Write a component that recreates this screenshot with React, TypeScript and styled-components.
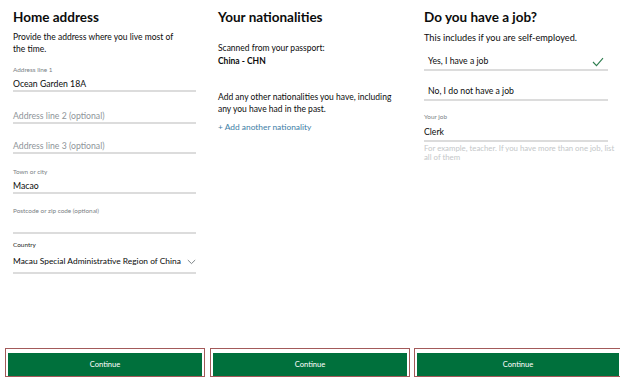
import React from "react";
import styled, { createGlobalStyle } from "styled-components";

const Global = createGlobalStyle`
  * { box-sizing: border-box; }
  html, body { margin: 0; padding: 0; background: #ffffff; }
  body { font-family: Lato, "Liberation Sans", sans-serif; color: #0b0c0c; }
`;

const Screen = styled.div`
  width: 620px;
  height: 390px;
  display: grid;
  grid-template-columns: 206px 206px 208px;
  overflow: hidden;
`;

const Panel = styled.section<{ $pad: number; $btnLeft: number; $btnRight: number }>`
  display: flex;
  flex-direction: column;
  height: 390px;
  padding: 6px 0 13px 0;
  --pad: ${(p) => p.$pad}px;
  --btn-left: ${(p) => p.$btnLeft}px;
  --btn-right: ${(p) => p.$btnRight}px;
`;

const Content = styled.div`
  flex: 1;
  padding: 0 6px 0 var(--pad);
  display: flex;
  flex-direction: column;
`;

const Heading = styled.h1`
  margin: 0;
  font-size: 13.5px;
  line-height: 22px;
  font-weight: 700;
`;

const Para = styled.p<{ $mt: number; $lh?: number; $w?: number; $size?: number }>`
  margin: ${(p) => p.$mt}px 0 0 0;
  font-size: ${(p) => p.$size ?? 8.5}px;
  line-height: ${(p) => p.$lh ?? 12}px;
  max-width: ${(p) => p.$w ?? 170}px;
`;

const Strong = styled.span`
  font-weight: 700;
`;

const Field = styled.div<{ $mt: number; $w?: number }>`
  margin-top: ${(p) => p.$mt}px;
  width: ${(p) => p.$w ?? 183}px;
  display: flex;
  flex-direction: column;
`;

const Label = styled.div<{ $dark?: boolean }>`
  font-size: 6.4px;
  line-height: 10px;
  color: ${(p) => (p.$dark ? "#1d1f20" : "#7a8185")};
`;

const Input = styled.div<{ $mt?: number; $h?: number; $placeholder?: boolean; $indent?: number; $size?: number }>`
  margin-top: ${(p) => p.$mt ?? 3}px;
  height: ${(p) => (p.$h ?? 12) + 2}px;
  line-height: 12px;
  padding-left: ${(p) => p.$indent ?? 0}px;
  font-size: ${(p) => p.$size ?? 8.7}px;
  color: ${(p) => (p.$placeholder ? "#8e9599" : "#0b0c0c")};
  border-bottom: 2px solid #dcdcdc;
  display: flex;
  align-items: flex-start;
  justify-content: space-between;
  white-space: nowrap;
`;

const Hint = styled.div`
  margin-top: 1.5px;
  font-size: 7.8px;
  line-height: 9px;
  color: #c4c7c9;
  width: 192px;
`;

const Link = styled.a`
  margin-top: 6px;
  font-size: 8.4px;
  line-height: 12px;
  color: #3d7ea6;
  text-decoration: none;
`;

const ButtonFrame = styled.div`
  margin: 0 var(--btn-right) 0 var(--btn-left);
  height: 29px;
  padding: 2px;
  border: 1px solid #a35a5a;
  background: #ffffff;
`;

const Button = styled.button`
  width: 100%;
  height: 100%;
  border: 0;
  background: #00703c;
  color: #ffffff;
  font-family: Lato, "Liberation Sans", sans-serif;
  font-size: 7.6px;
  padding: 0;
  cursor: pointer;
`;

const Chevron = () => (
  <svg width="9" height="6" viewBox="0 0 9 6" style={{ marginTop: 4 }}>
    <path d="M0.8 1 L4.5 4.6 L8.2 1" fill="none" stroke="#6f777b" strokeWidth="0.9" />
  </svg>
);

const Check = () => (
  <svg width="12" height="10" viewBox="0 0 12 10" style={{ marginTop: 2, marginRight: 4 }}>
    <path d="M1 5 L4.5 8.6 L11 1.2" fill="none" stroke="#2e7d4f" strokeWidth="1.1" />
  </svg>
);

export default function App() {
  return (
    <>
      <Global />
      <Screen>
        <Panel $pad={13} $btnLeft={5} $btnRight={1}>
          <Content>
            <Heading>Home address</Heading>
            <Para $mt={3}>Provide the address where you live most of the time.</Para>
            <Field $mt={10}>
              <Label>Address line 1</Label>
              <Input>Ocean Garden 18A</Input>
            </Field>
            <Field $mt={18}>
              <Input $mt={0} $placeholder>Address line 2 (optional)</Input>
            </Field>
            <Field $mt={16}>
              <Input $mt={0} $placeholder>Address line 3 (optional)</Input>
            </Field>
            <Field $mt={13}>
              <Label>Town or city</Label>
              <Input>Macao</Input>
            </Field>
            <Field $mt={12}>
              <Label>Postcode or zip code (optional)</Label>
              <Input $mt={4} />
            </Field>
            <Field $mt={6}>
              <Label $dark>Country</Label>
              <Input $mt={5} $h={17} $size={8.4}>
                <span>Macau Special Administrative Region of China</span>
                <Chevron />
              </Input>
            </Field>
          </Content>
          <ButtonFrame>
            <Button>Continue</Button>
          </ButtonFrame>
        </Panel>

        <Panel $pad={12} $btnLeft={4} $btnRight={2}>
          <Content>
            <Heading>Your nationalities</Heading>
            <Para $mt={14} $lh={13} $w={190}>
              Scanned from your passport:
              <br />
              <Strong>China - CHN</Strong>
            </Para>
            <Para $mt={24} $lh={11.5} $w={185}>
              Add any other nationalities you have, including any you have had in the past.
            </Para>
            <Link href="#">+ Add another nationality</Link>
          </Content>
          <ButtonFrame>
            <Button>Continue</Button>
          </ButtonFrame>
        </Panel>

        <Panel $pad={12} $btnLeft={2} $btnRight={-2}>
          <Content>
            <Heading>Do you have a job?</Heading>
            <Para $mt={4} $w={190} $size={9.2}>This includes if you are self-employed.</Para>
            <Field $mt={11} $w={184}>
              <Input $mt={0} $h={14} $indent={4}>
                <span>Yes, I have a job</span>
                <Check />
              </Input>
            </Field>
            <Field $mt={14} $w={184}>
              <Input $mt={0} $h={14} $indent={4}>
                <span>No, I do not have a job</span>
              </Input>
            </Field>
            <Field $mt={11} $w={184}>
              <Label>Your job</Label>
              <Input $mt={4} $h={14}>Clerk</Input>
            </Field>
            <Hint>For example, teacher. If you have more than one job, list all of them</Hint>
          </Content>
          <ButtonFrame>
            <Button>Continue</Button>
          </ButtonFrame>
        </Panel>
      </Screen>
    </>
  );
}
